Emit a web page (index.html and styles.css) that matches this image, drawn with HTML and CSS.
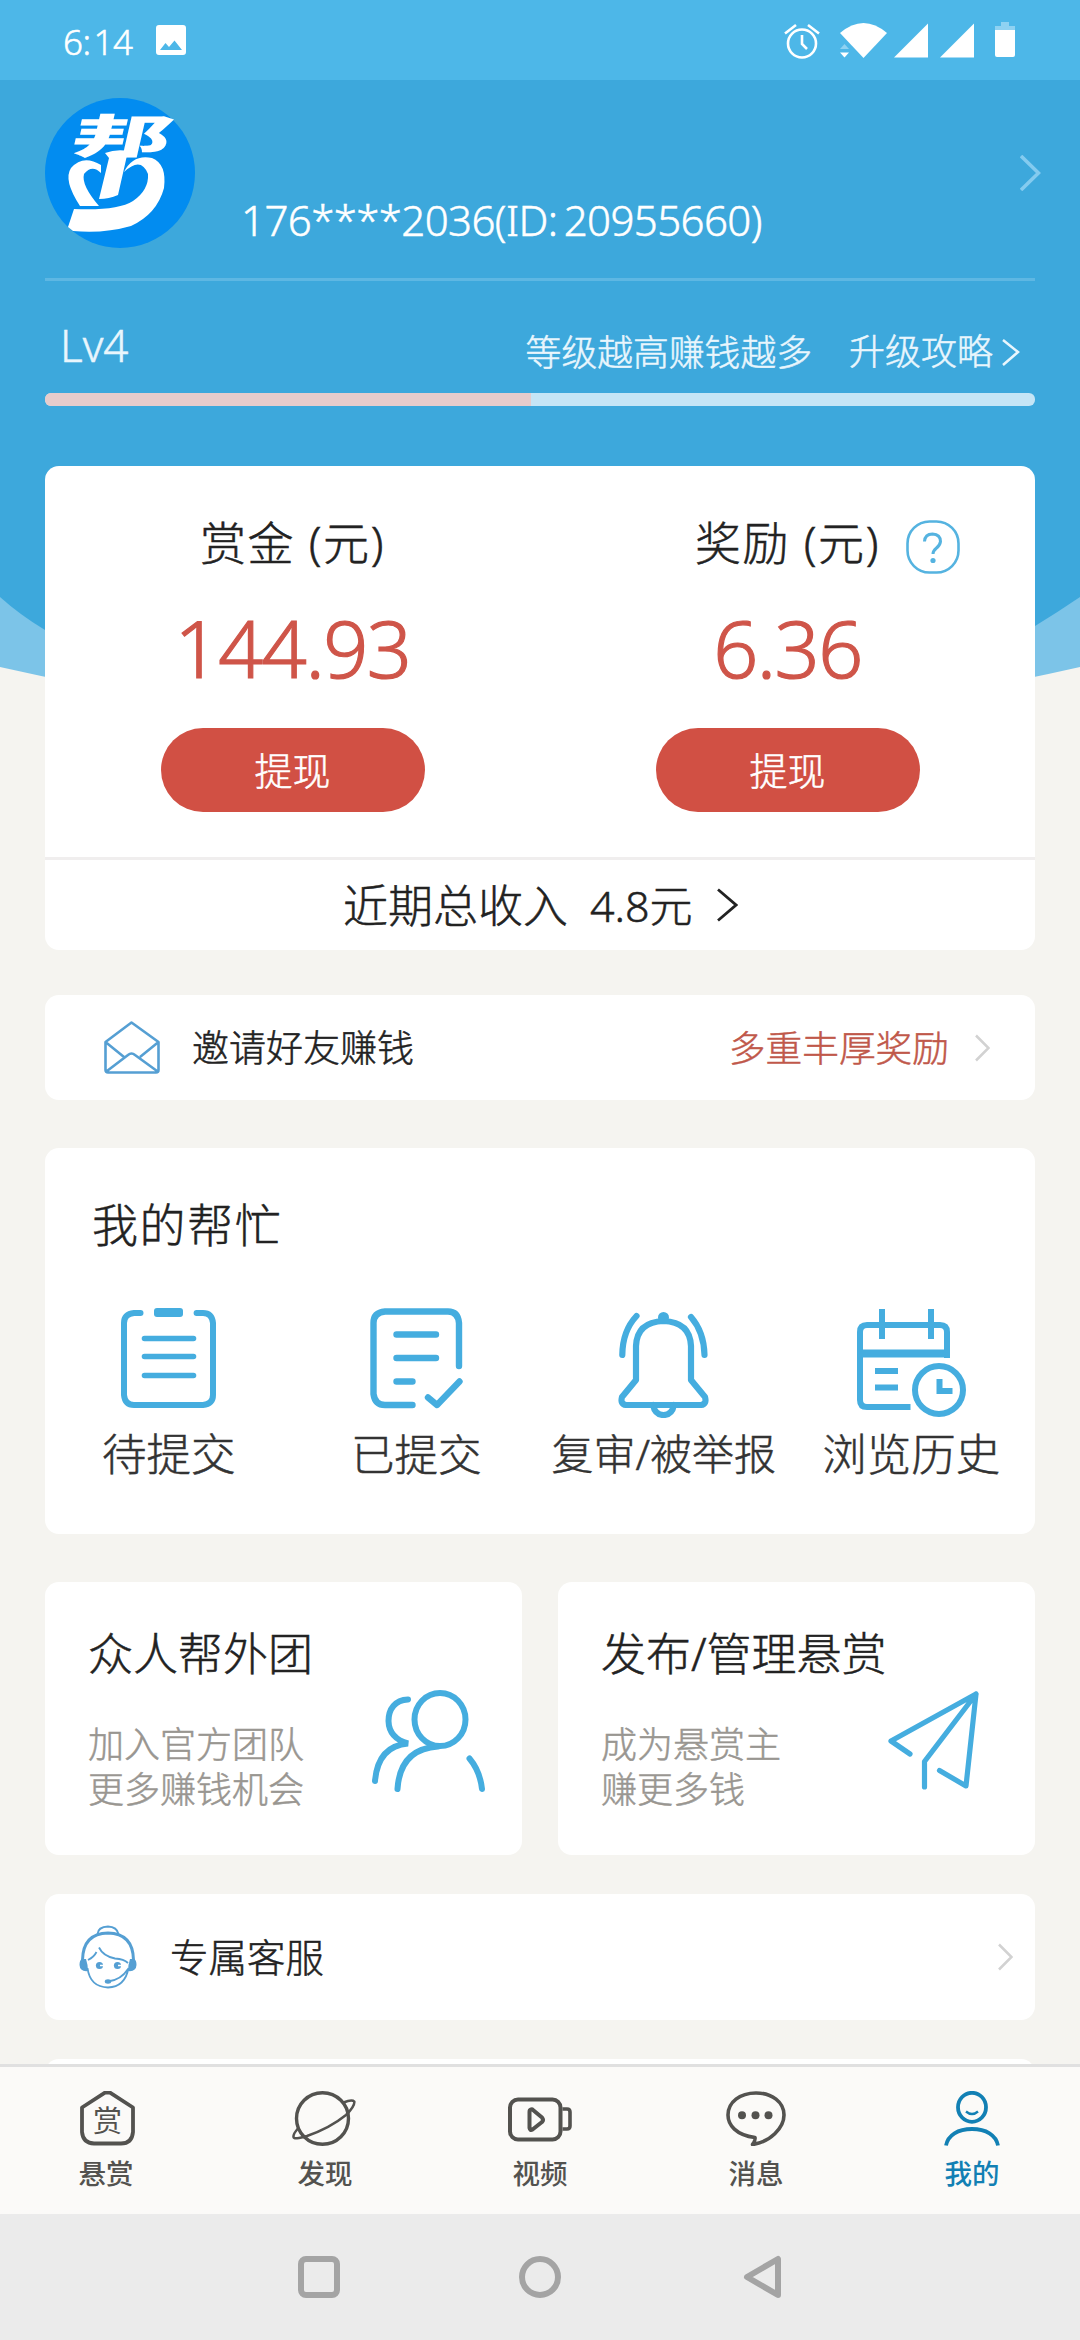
FILE: index.html
```
<!DOCTYPE html>
<html lang="zh-CN">
<head>
<meta charset="utf-8">
<title>我的</title>
<link rel="stylesheet" href="styles.css">
</head>
<body>
<div class="status">
  <span class="clock">6:&hairsp;14</span>
  <svg class="s-photo" width="30" height="30" viewBox="0 0 30 30"><path fill="#fff" fill-rule="evenodd" d="M3 0H27Q30 0 30 3V27Q30 30 27 30H3Q0 30 0 27V3Q0 0 3 0ZM4 25H26L18.500 15.500 13 22 9.500 18Z"/></svg>
  <svg class="s-alarm" width="36" height="36" viewBox="0 0 36 36" fill="none" stroke="#fff" stroke-width="2.600"><circle cx="18" cy="20.500" r="14"/><path d="M18 12V21L23 26M1 10.500 12 2M24 2 35 10.500"/></svg>
  <svg class="s-wifi" width="47" height="35" viewBox="0 0 47 35"><path fill="#fff" d="M0 10Q23.500-10 47 10L23.500 35Z"/><path fill="#8fd2f2" d="M0 26 4.500 21 9 26Z"/><path fill="#fff" d="M0 29.500H9L4.500 34.500Z"/></svg>
  <svg class="s-sig" width="35" height="35" viewBox="0 0 35 35"><path fill="#fff" d="M0 34.500 34 .5V34.500Z"/></svg>
  <svg class="s-sig2" width="35" height="35" viewBox="0 0 35 35"><path fill="#fff" d="M0 34.500 34 .5V34.500Z"/></svg>
  <svg class="s-bat" width="20" height="35" viewBox="0 0 20 35"><path fill="#8fd2f2" d="M6 0H14V4H20V8H0V4H6Z"/><path fill="#fff" d="M0 8H20V33Q20 35 18 35H2Q0 35 0 33Z"/></svg>
</div>

<main class="content">
  <svg class="wave" width="1080" height="620" viewBox="0 80 1080 620"><path fill="#7cc4e8" d="M0 80H1080V667Q540 790 0 667Z"/><path fill="#3da8dc" d="M0 80H1080V597Q1058 612 1035 626Q540 860 45 630Q20 615 0 597Z"/></svg>

  <section class="profile">
    <svg class="avatar" width="150" height="150" viewBox="0 0 150 150">
      <circle cx="75" cy="75" r="75" fill="#028cf0"/>
      <g fill="#fff">
        <text class="logo-text" transform="translate(24 55) skewX(-13) scale(1.040 .48)" font-size="96">邦</text>
        <path d="M60 55Q71 51 83 53L73 97Q64 101 54 101L64 60Z"/>
        <path d="M35 108Q18 82 26 70Q38 56 56 67V75Q47 66 39 76Q36 87 54 108Z"/>
        <path d="M79 74Q88 56 107 60Q122 66 119 90Q112 116 86 128Q58 136 28 133L23 129 29 111Q72 113 88 103Q104 92 103 76Q96 58 79 74Z"/>
      </g>
    </svg>
    <span class="uid">176****2036(ID:&thinsp;20955660)</span>
    <svg class="go" width="21" height="36" viewBox="0 0 21 36"><path d="M1 1 18.500 18 1 35" fill="none" stroke="#84cbef" stroke-width="3.600"/></svg>
  </section>

  <section class="level">
    <span class="lv">Lv4</span>
    <span class="hint">等级越高赚钱越多</span>
    <span class="guide">升级攻略</span>
    <svg class="guide-go" width="18" height="27" viewBox="0 0 18 27"><path d="M1 1 16 13 1 26" fill="none" stroke="#e9f6fd" stroke-width="2.500"/></svg>
  </section>
  <div class="bar"><div class="bar-fill"></div></div>

  <section class="card wallet">
    <div class="halves">
      <div class="half">
        <div class="w-title">赏金 (元)</div>
        <div class="amount">144.93</div>
        <button class="btn">提现</button>
      </div>
      <div class="half">
        <div class="w-title">奖励 (元)
          <svg class="help" width="54" height="54" viewBox="0 0 54 54" fill="none" stroke="#55b3e0"><rect x="1.500" y="1.500" width="51" height="51" rx="22" stroke-width="2.600"/><path d="M18.500 21.500Q19 14 26.500 14Q34.500 14.500 34.500 21.500Q34 25.500 30 28.500Q27 31 27 34" stroke-width="3"/><circle cx="27" cy="40.500" r="2.600" fill="#55b3e0" stroke="none"/></svg>
        </div>
        <div class="amount">6.36</div>
        <button class="btn">提现</button>
      </div>
    </div>
    <div class="recent"><span class="r-label">近期总收入</span><span class="r-val">4.8元</span>
      <svg width="21" height="34" viewBox="0 0 21 34"><path d="M1 1.500 19 17 1 32.500" fill="none" stroke="#222" stroke-width="2.800"/></svg>
    </div>
  </section>

  <section class="card invite">
    <svg class="mail" width="56" height="53" viewBox="0 0 56 53" fill="none" stroke="#559fd3" stroke-width="2.600" stroke-linejoin="round"><path d="M1.500 21 27.500 1.500 54.500 21V49Q54.500 51.500 52 51.500H4Q1.500 51.500 1.500 49ZM1.500 21 20 36M54.500 21 36 36M3 50 24 34Q27.500 31 31 34L53 50"/></svg>
    <span class="i-label">邀请好友赚钱</span>
    <span class="i-note">多重丰厚奖励</span>
    <svg width="15" height="28" viewBox="0 0 15 28"><path d="M1 1.500 13.500 14 1 26.500" fill="none" stroke="#d2d2d2" stroke-width="2.500"/></svg>
  </section>

  <section class="card help-card">
    <h2 class="h-title">我的帮忙</h2>
    <div class="grid">
      <div class="cell">
        <svg width="96" height="110" viewBox="0 0 96 110" fill="none" stroke="#45addf" stroke-width="6" stroke-linecap="round"><path d="M19.500 5H13Q3 6 3 15V87Q4 97 13 97H82Q92 96 92 87V15Q91 5 82 5H75.600"/><path d="M23.500 30.500H72.500M23.500 48.500H72.500M23.500 67.500H72.500" stroke-width="5.600"/><rect x="33" y="0" width="29" height="9" rx="3" fill="#45addf" stroke="none"/></svg>
        <span class="c-label">待提交</span>
      </div>
      <div class="cell">
        <svg width="93" height="110" viewBox="0 0 93 110" fill="none" stroke="#45addf" stroke-width="6.400" stroke-linecap="round" stroke-linejoin="round"><path d="M89 58V15Q88 3.500 78 3.500H15Q3.500 4.500 3.500 15V86Q5 97 15 97H42.500M26.500 26.500H66M26.500 50H66M26.500 73.500H42.500M58 89.500 67 97 89.500 73.500"/></svg>
        <span class="c-label c2">已提交</span>
      </div>
      <div class="cell">
        <svg width="93" height="110" viewBox="0 -2 93 110" fill="none" stroke="#45addf" stroke-width="6.200" stroke-linecap="round" stroke-linejoin="round"><path d="M19 70V36Q20 12 46.500 11Q73 12 74 36V70L88 87Q90 94 84 95H9Q3 94 5 87ZM36 95Q38 105 46.500 105Q55 105 57 95M19.500 6Q5.500 21 5.300 45M74 7Q87 22 87.500 45"/><circle cx="46.500" cy="7.500" r="5.500" fill="#45addf" stroke="none"/></svg>
        <span class="c-label c3">复审/被举报</span>
      </div>
      <div class="cell">
        <svg width="109" height="110" viewBox="0 -1 109 110" fill="none" stroke="#45addf" stroke-width="6"><path d="M90 49V23Q90 16 83 16H10Q3 16 3 23V91Q3 98 10 98H53.500M25 0V30M74 0V30M18 62H41M18 78.500H41M82.500 70V82H95.500"/><path d="M3 44.500H90" stroke-width="8"/><circle cx="82" cy="81" r="24"/></svg>
        <span class="c-label">浏览历史</span>
      </div>
    </div>
  </section>

  <div class="pair">
    <section class="card tile">
      <h3 class="t-title">众人帮外团</h3>
      <p class="t-sub">加入官方团队<br>更多赚钱机会</p>
      <svg class="t-ico people" width="114" height="103" viewBox="0 0 114 103" fill="none" stroke="#45addf" stroke-width="6" stroke-linecap="round"><ellipse cx="68" cy="29.500" rx="25.500" ry="26.500"/><path d="M36 9.500C23 10 16.500 19 16.500 31Q17 48 36 53.500Q6 56 3 91M66 56.500Q28 59 25.500 99M97.500 68.500Q108 81 110 99"/></svg>
    </section>
    <section class="card tile">
      <h3 class="t-title">发布/管理悬赏</h3>
      <p class="t-sub">成为悬赏主<br>赚更多钱</p>
      <svg class="t-ico plane" width="92" height="100" viewBox="0 0 92 100" fill="none" stroke="#45addf" stroke-width="5.200" stroke-linecap="round" stroke-linejoin="round"><path d="M22 64 3 51 88 4 78 96 51.500 80.500M36.500 97V71.500L88 4"/></svg>
    </section>
  </div>

  <section class="card service">
    <svg class="agent" width="58" height="64" viewBox="0 0 58 64" fill="none" stroke="#559fd3" stroke-width="1.800"><path d="M8.500 43Q11 62 29 62.500Q46 62 49.500 43M9 35Q15 32 17.500 27M20 22.500Q24 31 36 33.500Q45 34 49 38M49 44Q42 55 29 56.500"/><path d="M18.500 9Q19 2 29 1.500Q38 2 39.500 9"/><path d="M3.500 35Q4 8.500 29 8Q54 8.500 54.500 35" stroke-width="3"/><g fill="#559fd3" stroke="none"><path d="M3 34H7Q9 40 9 46Q1 47 .5 40Q.5 35 3 34ZM55 34H51Q49 40 49 46Q57 47 57.500 40Q57.500 35 55 34Z"/><circle cx="20.500" cy="40.500" r="3.600"/><circle cx="38.500" cy="40.500" r="3.600"/><ellipse cx="29" cy="56.500" rx="3.200" ry="2.200"/></g><path d="M21 40.500H25M39 40.500H43" stroke="#fff" stroke-width="1.600"/></svg>
    <span class="s-label">专属客服</span>
    <svg width="15" height="28" viewBox="0 0 15 28"><path d="M1 1.500 13.500 14 1 26.500" fill="none" stroke="#d2d2d2" stroke-width="2.500"/></svg>
  </section>
  <section class="card next"></section>
</main>

<nav class="tabs">
  <div class="tab t1"><svg width="55" height="55" viewBox="0 0 55 55"><path d="M25 1.700H30L53 16.500V41Q52 52.500 41 52.500H14Q3 52 2 41V16.500Z" fill="none" stroke="#53524f" stroke-width="3.800" stroke-linejoin="round"/><text class="badge-text" x="27.500" y="41" text-anchor="middle">赏</text></svg><span>悬赏</span></div>
  <div class="tab t2"><svg width="64" height="55" viewBox="0 0 64 55" fill="none" stroke="#53524f"><ellipse cx="30.500" cy="27.500" rx="26" ry="25.800" stroke-width="3.400"/><path d="M51.500 11.500Q60 8 62.300 10.500Q63 15 54 24Q38 37 15 45Q2 49 1.500 46Q1 43 6 37.500" stroke-width="2.500"/></svg><span>发现</span></div>
  <div class="tab t3"><svg width="64" height="55" viewBox="0 -6 64 55" fill="none" stroke="#53524f" stroke-width="4" stroke-linejoin="round"><rect x="2" y="2.500" width="50.500" height="40" rx="8"/><path d="M23 12.500Q21.500 13 21.500 15V31Q22 34 24.500 32.500L34 25Q36 23 34 20.500L25 13Q24 12 23 12.500Z"/><path d="M54.500 12H59Q62 12 62 15V29Q62 32 59 32H54.500" stroke-width="3.600"/></svg><span>视频</span></div>
  <div class="tab t4"><svg width="60" height="55" viewBox="0 0 60 55"><path d="M29 46.500C10 44 2 34 2 24C2 11 14 2 30 2C46 2 58 11 58 24C58 37 44 51 26.500 53.500Q29.500 50 29 46.500Z" fill="none" stroke="#53524f" stroke-width="3.600" stroke-linejoin="round"/><g fill="#53524f"><circle cx="16" cy="24.300" r="4"/><circle cx="29.500" cy="24.300" r="4"/><circle cx="42.500" cy="24.300" r="4"/></g></svg><span>消息</span></div>
  <div class="tab t5 on"><svg width="56" height="55" viewBox="0 0 56 55" fill="none" stroke="#1280b4"><ellipse cx="28" cy="16.300" rx="14" ry="14.500" stroke-width="3.800"/><path d="M22 20.500Q28 25.500 34 20.500" stroke-width="2.400"/><path d="M2 54.500C4 44 14 38 28 38C42 38 52 44 54 54.500" stroke-width="3.800"/></svg><span>我的</span></div>
</nav>
<div class="sysnav">
  <svg width="42" height="44" viewBox="0 0 42 44"><rect x="3" y="4" width="36" height="36" rx="5" fill="none" stroke="#a4a4a4" stroke-width="6"/></svg>
  <svg width="42" height="44" viewBox="0 0 42 44"><circle cx="21" cy="22" r="18" fill="none" stroke="#a4a4a4" stroke-width="6"/></svg>
  <svg width="42" height="44" viewBox="0 0 42 44"><path d="M38 4V40L7 22Z" fill="none" stroke="#a4a4a4" stroke-width="6" stroke-linejoin="round"/></svg>
</div>
</body>
</html>
```
FILE: styles.css
```
* { box-sizing: border-box; margin: 0; padding: 0; }
body {
  width: 1080px;
  height: 2340px;
  display: flex;
  flex-direction: column;
  overflow: hidden;
  background: #f5f4f0;
  color: #222;
  font-family: "Noto Sans", "Noto Sans CJK SC", sans-serif;
  font-weight: 300;
  -webkit-text-stroke: 0.5px currentColor;
  white-space: nowrap;
}
svg { display: block; flex: none; }

.status {
  height: 80px;
  flex: none;
  display: flex;
  align-items: flex-start;
  padding: 22px 65px 0 63px;
  background: #4db7e8;
  color: #fff;
}
.clock { width: 93px; font-size: 35px; line-height: 40px; letter-spacing: -0.5px; }
.s-photo { margin-top: 3px; }
.s-alarm { margin: 1px 0 0 auto; }
.s-wifi { margin: 1px 0 0 20px; }
.s-sig { margin: 1px 0 0 7px; }
.s-sig2 { margin: 1px 0 0 11px; }
.s-bat { margin-left: 20px; }

.content {
  position: relative;
  flex: 1;
  min-height: 0;
  overflow: hidden;
  padding: 0 45px;
}
.wave { position: absolute; left: 0; top: 0; z-index: -1; }

.profile {
  height: 201px;
  display: flex;
  padding-top: 18px;
  border-bottom: 3px solid #5eb7e3;
  color: #fff;
}
.logo-text { font-family: "Noto Sans CJK SC", sans-serif; font-weight: 900; }
.uid { margin: 92px 0 0 46px; font-size: 42px; line-height: 60px; letter-spacing: -0.6px; }
.go { margin: 57px -6px 0 auto; }

.level {
  height: 112px;
  display: flex;
  padding: 34px 15px 0;
  color: #e9f6fd;
  line-height: 60px;
}
.lv { font-size: 44px; }
.hint { margin: 7px 37px 0 auto; font-size: 35.800px; }
.guide { margin: 7px 9px 0 0; font-size: 36px; }
.guide-go { margin-top: 24px; }
.bar { height: 13px; border-radius: 6px; overflow: hidden; background: #c5e5f6; }
.bar-fill { width: 486px; height: 100%; background: #e6cccc; }

.card { background: #fff; border-radius: 14px; }
.wallet { height: 484px; margin-top: 60px; }
.halves { height: 394px; display: flex; border-bottom: 3px solid #f0eeee; }
.half { flex: 1; display: flex; flex-direction: column; align-items: center; padding-top: 46px; }
.w-title { position: relative; font-size: 46px; line-height: 60px; letter-spacing: 1.6px; }
.help { position: absolute; right: -80px; top: 8px; }
.amount { margin-top: 26px; font-size: 79px; line-height: 100px; letter-spacing: -1.5px; color: #cf5549; -webkit-text-stroke: 1.2px currentColor; }
.btn {
  width: 264px;
  height: 84px;
  margin-top: 30px;
  padding-bottom: 3px;
  border: 0;
  border-radius: 42px;
  background: #d15044;
  color: #fff;
  font: inherit;
  font-size: 38px;
}
.recent {
  height: 90px;
  display: flex;
  align-items: center;
  padding-left: 298px;
  font-size: 45px;
}
.r-label, .r-val { padding-bottom: 3px; }
.r-val { margin: 0 24px 0 22px; font-size: 43px; }

.invite { height: 105px; margin-top: 45px; display: flex; align-items: center; padding: 0 45px 0 59px; }
.i-label { margin-left: 32px; padding-bottom: 3px; font-size: 37px; }
.i-note { margin: 0 26px 0 auto; padding-bottom: 3px; font-size: 36.700px; color: #c0584a; }

.help-card { height: 386px; margin-top: 48px; padding-top: 46px; }
.h-title { margin-left: 47px; font-size: 46px; font-weight: 300; line-height: 60px; letter-spacing: 1.600px; }
.grid { display: grid; grid-template-columns: repeat(4, 1fr); margin-top: 54px; }
.cell { display: flex; flex-direction: column; align-items: center; }
.c-label { margin-top: 6px; font-size: 44.500px; line-height: 60px; color: #333; }
.c2 { font-size: 43.500px; }
.c3 { font-size: 42px; }

.pair { display: flex; gap: 36px; margin-top: 48px; }
.tile { position: relative; flex: 1; height: 273px; padding: 42px 43px 0; }
.t-title { font-size: 45px; font-weight: 300; line-height: 60px; }
.t-sub { margin-top: 38px; font-size: 36px; line-height: 45px; color: #999691; }
.t-ico { position: absolute; top: 108px; }
.people { right: 36px; }
.plane { right: 55px; }

.service { height: 126px; margin-top: 39px; display: flex; align-items: center; padding: 0 22px 0 34px; }
.s-label { margin: 0 auto 0 33px; padding-bottom: 4px; font-size: 38.500px; }
.next { height: 126px; margin-top: 39px; }

.tabs {
  height: 150px;
  flex: none;
  display: grid;
  grid-template-columns: repeat(5, 1fr);
  padding-top: 24px;
  border-top: 3px solid #e0e0e0;
  background: #fbfaf8;
  color: #53524f;
  -webkit-text-stroke: 0;
}
.tab { display: flex; flex-direction: column; align-items: center; gap: 8px; font-size: 27.500px; font-weight: 500; line-height: 40px; }
.tab.on { color: #1280b4; }
.t1 svg { margin-right: 1px; }
.t1 span { margin-right: 4px; }
.t2 span { margin-left: 2px; }
.badge-text { font: 400 29px "Noto Sans CJK SC", sans-serif; fill: #53524f; }

.sysnav {
  height: 126px;
  flex: none;
  display: flex;
  justify-content: center;
  align-items: center;
  gap: 179px;
  background: #ebebeb;
}
```
